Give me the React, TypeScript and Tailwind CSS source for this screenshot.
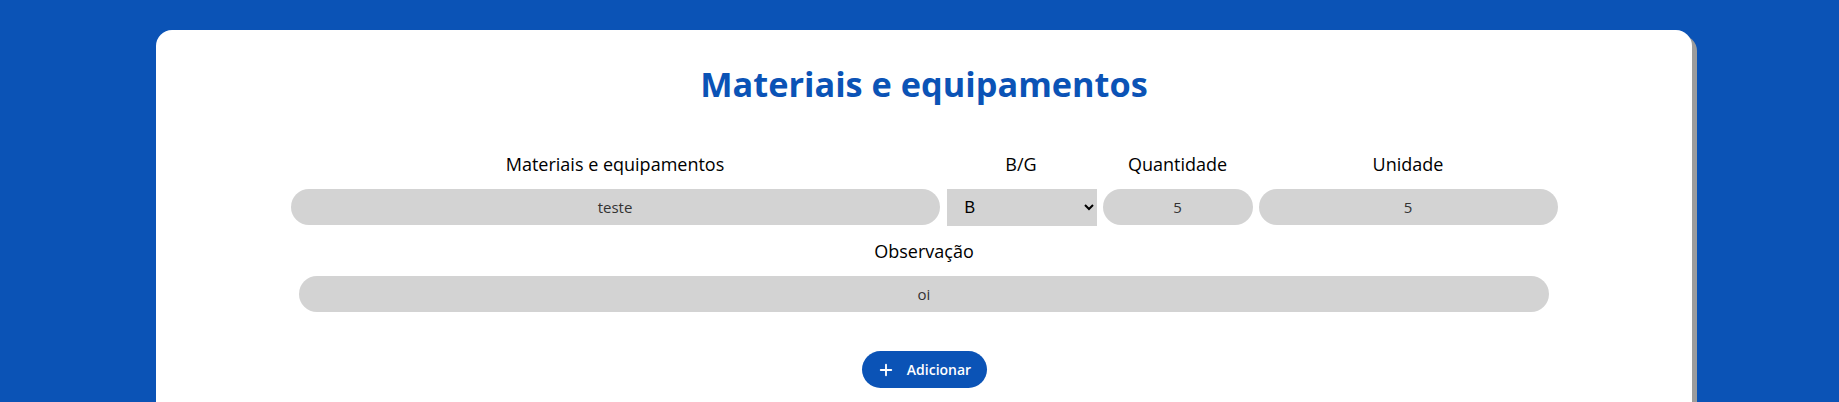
import { Plus } from 'lucide-react';

const inputClass =
  'h-9 rounded-full bg-[#d3d3d3] text-center text-[15px] text-[#333] outline-none';

function Field({ label, children }: { label: string; children: React.ReactNode }) {
  return (
    <div className="flex flex-col items-center">
      <label className="mb-[13px] text-[18px] leading-6 text-black">{label}</label>
      {children}
    </div>
  );
}

export default function App() {
  return (
    <div
      className="h-[402px] overflow-hidden bg-[#0b53b6] pl-[156px] pt-[30px]"
      style={{ fontFamily: '"Open Sans", sans-serif' }}
    >
      <div className="flex h-[400px] w-[1536px] flex-col items-center rounded-t-[16px] bg-white pt-[32px] shadow-[5px_5px_0_#9c9c9c]">
        <h1 className="text-[34.3px] font-bold leading-[43px] text-[#0b53b6]">
          Materiais e equipamentos
        </h1>

        <div className="mt-[47px] flex gap-[6px]">
          <Field label="Materiais e equipamentos">
            <input className={`${inputClass} w-[649px]`} defaultValue="teste" />
          </Field>
          <Field label="B/G">
            <select
              defaultValue="B"
              className="ml-px h-[37px] w-[150px] bg-[#d3d3d3] pl-[14px] pr-[6px] text-[16px] text-black"
              style={{ fontFamily: '"Liberation Sans", Arial, sans-serif' }}
            >
              <option value="B">B</option>
              <option value="G">G</option>
            </select>
          </Field>
          <Field label="Quantidade">
            <input className={`${inputClass} w-[150px]`} defaultValue="5" />
          </Field>
          <Field label="Unidade">
            <input className={`${inputClass} w-[299px]`} defaultValue="5" />
          </Field>
        </div>

        <div className="mt-[13px]">
          <Field label="Observação">
            <input className={`${inputClass} w-[1250px]`} defaultValue="oi" />
          </Field>
        </div>

        <button className="mt-[39px] flex h-[37px] w-[125px] items-center justify-center gap-[12px] rounded-full bg-[#0b53b6] text-[14px] font-semibold text-white">
          <Plus size={18} strokeWidth={2.5} />
          Adicionar
        </button>
      </div>
    </div>
  );
}
